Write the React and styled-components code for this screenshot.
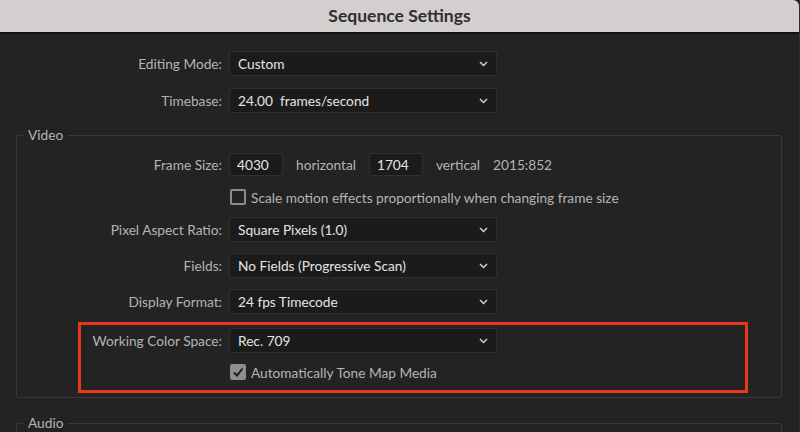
import React from 'react';
import styled, { createGlobalStyle } from 'styled-components';

const Global = createGlobalStyle`
  html, body {
    margin: 0;
    padding: 0;
    background: #232323;
  }
  * { box-sizing: border-box; }
`

const Window = styled.div`
  width: 800px;
  height: 432px;
  overflow: hidden;
  background: #232323;
  font-family: Lato, "Open Sans", sans-serif;
  font-size: 13.7px;
  color: #b4b4b4;
  border-right: 1px solid #2e2e2e;
`

const TitleBar = styled.div`
  height: 34px;
  background: #d3cfce;
  border-bottom: 2px solid #121212;
  border-top-right-radius: 6px;
  display: flex;
  align-items: center;
  justify-content: center;
  color: #2e2e2e;
  font-weight: 700;
  font-size: 17.5px;
  padding-bottom: 2px;
`

const Body = styled.div`
  padding: 17px 17px 0 16px;
  display: flex;
  flex-direction: column;
  gap: 12px;
`

const Row = styled.div`
  display: grid;
  grid-template-columns: ${p => p.labelWidth}px auto;
  column-gap: 7px;
  align-items: center;
  height: ${p => (p.small ? 18 : 25)}px;
`

const Label = styled.div`
  text-align: right;
  white-space: nowrap;
  color: #b4b4b4;
`

const SelectBox = styled.div`
  width: 268px;
  height: 25px;
  background: #1b1b1b;
  border: 1px solid #2f2f2f;
  border-radius: 2px;
  display: flex;
  align-items: center;
  justify-content: space-between;
  padding: 0 8px 0 8px;
  color: #e4e4e4;
  white-space: pre;
`

const Fieldset = styled.fieldset`
  margin: 0;
  padding: 7px 0 4px 0;
  border: 1px solid #383838;
  border-radius: 2px;
  display: flex;
  flex-direction: column;
  gap: 11px;
  min-width: 0;
`

const Legend = styled.legend`
  margin-left: 7px;
  padding: 0 4px;
  line-height: 20px;
  color: #b4b4b4;
`

const Controls = styled.div`
  display: flex;
  align-items: center;
  gap: 13px;
  white-space: nowrap;
`

const NumberInput = styled.div`
  width: 54px;
  height: 23px;
  background: #1b1b1b;
  border: 1px solid #2f2f2f;
  border-radius: 2px;
  display: flex;
  align-items: center;
  padding-left: 7px;
  color: #e4e4e4;
`

const CheckRow = styled.div`
  display: flex;
  align-items: center;
  gap: 5px;
  padding-left: 1px;
  white-space: nowrap;
  color: #b4b4b4;
`

const Box = styled.div`
  width: 16px;
  height: 16px;
  border: 2px solid #8c8c8c;
  border-radius: 2px;
  background: ${p => (p.checked ? '#8f8f8f' : 'transparent')};
  display: flex;
  align-items: center;
  justify-content: center;
`

const Highlight = styled.div`
  margin: -3px 0 0 61px;
  width: 670px;
  border: 3px solid #e5381d;
  padding: 3px 0 9px 0;
  display: flex;
  flex-direction: column;
  gap: 10px;
`

const AudioSet = styled(Fieldset)`
  margin-top: 3px;
  height: 60px;
`

function Chevron() {
  return (
    <svg width="9" height="6" viewBox="0 0 9 6">
      <polyline points="1,1 4.5,4.5 8,1" fill="none" stroke="#d0d0d0" strokeWidth="1.5" />
    </svg>
  )
}

function Select({ value }) {
  return (
    <SelectBox>
      <span>{value}</span>
      <Chevron />
    </SelectBox>
  )
}

function Check({ checked, children }) {
  return (
    <CheckRow>
      <Box checked={checked}>
        {checked && (
          <svg width="12" height="12" viewBox="0 0 12 12">
            <polyline points="2,6.5 5,9.5 10.5,2.5" fill="none" stroke="#1c1c1c" strokeWidth="2" />
          </svg>
        )}
      </Box>
      {children}
    </CheckRow>
  )
}

export default function App() {
  return (
    <Window>
      <Global />
      <TitleBar>Sequence Settings</TitleBar>
      <Body>
        <Row labelWidth={206}>
          <Label>Editing Mode:</Label>
          <Select value="Custom" />
        </Row>
        <Row labelWidth={206}>
          <Label>Timebase:</Label>
          <Select value="24.00  frames/second" />
        </Row>

        <Fieldset>
          <Legend>Video</Legend>
          <Row labelWidth={205}>
            <Label>Frame Size:</Label>
            <Controls>
              <NumberInput>4030</NumberInput>
              <span>horizontal</span>
              <NumberInput>1704</NumberInput>
              <span>vertical</span>
              <span>2015:852</span>
            </Controls>
          </Row>
          <Row labelWidth={205} small>
            <span />
            <Check>Scale motion effects proportionally when changing frame size</Check>
          </Row>
          <Row labelWidth={205}>
            <Label>Pixel Aspect Ratio:</Label>
            <Select value="Square Pixels (1.0)" />
          </Row>
          <Row labelWidth={205}>
            <Label>Fields:</Label>
            <Select value="No Fields (Progressive Scan)" />
          </Row>
          <Row labelWidth={205}>
            <Label>Display Format:</Label>
            <Select value="24 fps Timecode" />
          </Row>
          <Highlight>
            <Row labelWidth={141}>
              <Label>Working Color Space:</Label>
              <Select value="Rec. 709" />
            </Row>
            <Row labelWidth={141} small>
              <span />
              <Check checked>Automatically Tone Map Media</Check>
            </Row>
          </Highlight>
        </Fieldset>

        <AudioSet>
          <Legend>Audio</Legend>
        </AudioSet>
      </Body>
    </Window>
  );
}
